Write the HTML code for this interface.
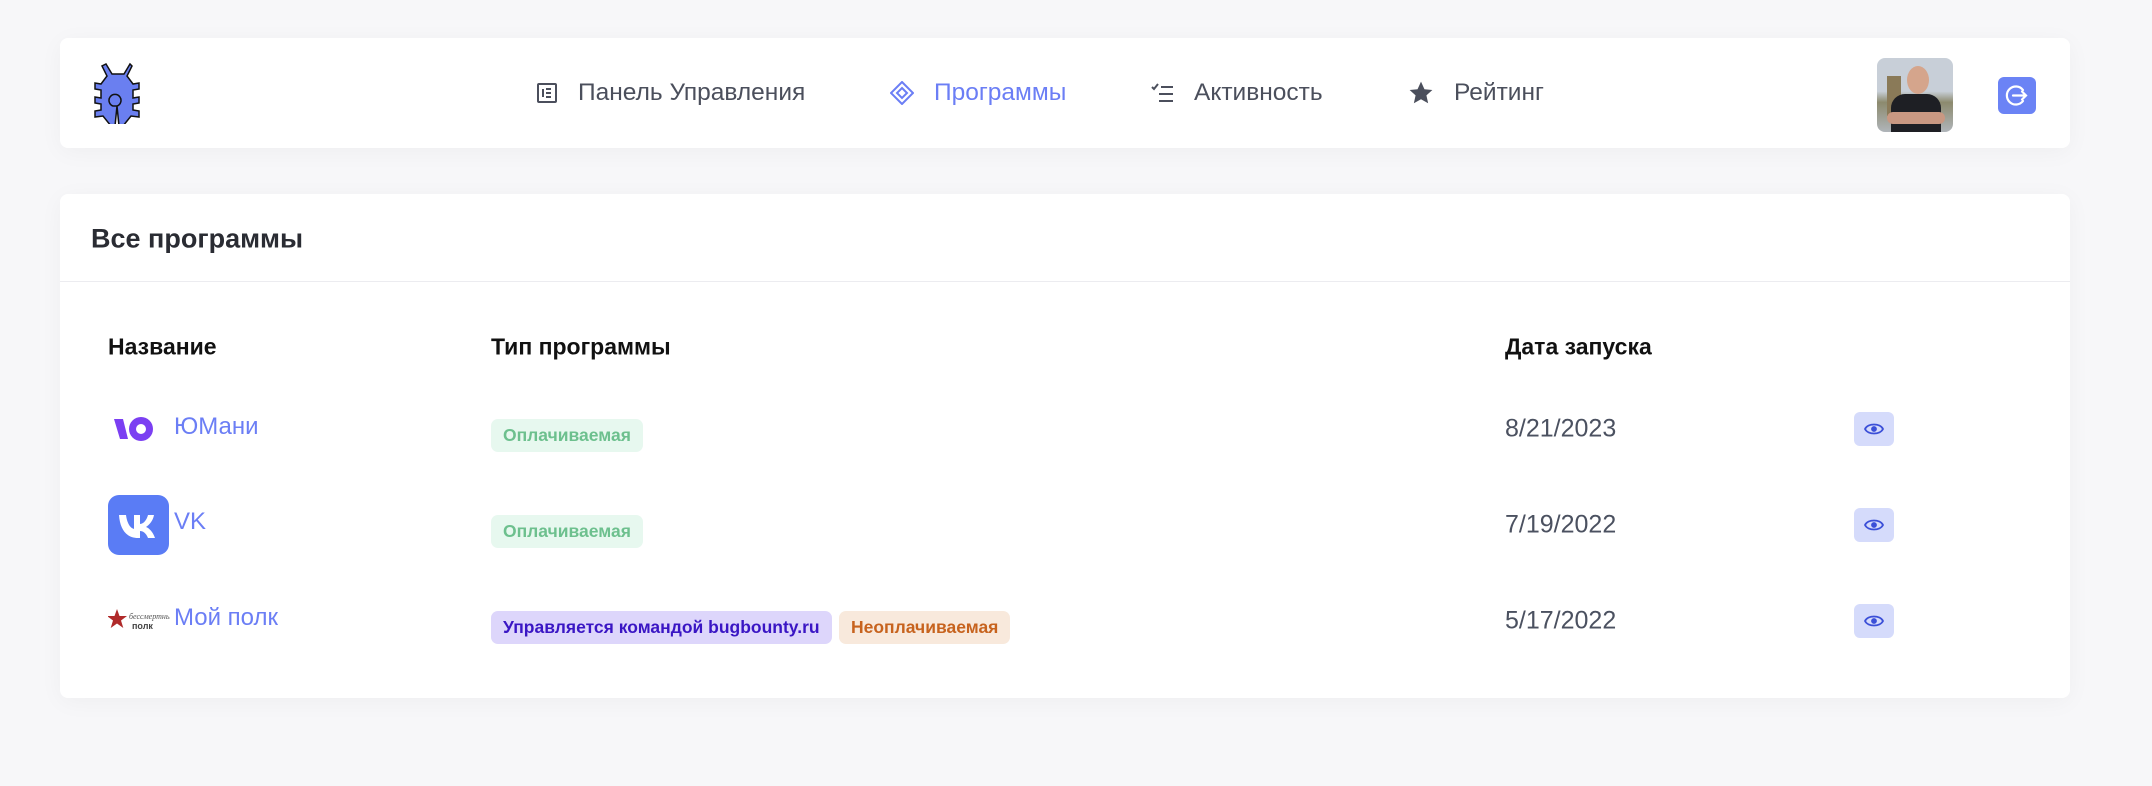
<!DOCTYPE html>
<html><head><meta charset="utf-8"><style>
*{box-sizing:border-box;margin:0;padding:0}
body{width:2152px;height:786px;background:#f7f7f9;font-family:"Liberation Sans","DejaVu Sans",sans-serif;position:relative;overflow:hidden}
.card{position:absolute;left:60px;width:2010px;background:#fff;border-radius:8px;box-shadow:0 4px 24px rgba(0,0,0,0.04)}
.nav{position:absolute;top:93px;transform:translateY(-50%);display:flex;align-items:center;font-size:24.5px;color:#4b4f5c}
.nav svg{margin-right:20px}
.abs{position:absolute}
.th{position:absolute;top:347px;transform:translateY(-50%);font-weight:bold;font-size:23px;color:#111}
.name{position:absolute;font-size:24px;color:#6b7ef5;transform:translateY(-50%)}
.badge{position:absolute;height:33px;line-height:33px;padding:0 12px;border-radius:7px;font-size:17.5px;font-weight:bold}
.date{position:absolute;left:1505px;font-size:25px;color:#4b5160;transform:translateY(-50%)}
.eye{position:absolute;left:1854px;width:40px;height:34px;background:#d5dbfb;border-radius:6px;display:flex;align-items:center;justify-content:center;transform:translateY(-50%)}
</style></head><body>
<div class="card" style="top:38px;height:110px"></div>
<svg class="abs" style="left:88px;top:62px" width="60" height="62" viewBox="0 0 60 62">
<path d="M18 2l6 10h12l6-10 2 2-5 10 6 8 6-1v6l-6 1v8l6-1v6l-6 1 0 6 6 1v6l-8-1-8 10-4 0-2-20h-4a6 6 0 1 1 4 0l-2 20h-4l-8-10-8 1v-6l6-1 0-6-6-1v-6l6 1v-8l-6-1v-6l6 1 6-8-5-10z" fill="#6a7ff0" stroke="#111" stroke-width="1.5"/>
</svg>
<div class="nav" style="left:536px"><svg width="22" height="22" viewBox="0 0 22 22" fill="none" stroke="#4b4f5c" stroke-width="2"><rect x="2" y="2" width="18" height="18" rx="1"/><path d="M7 7v8M10 7h5M10 11h5M10 15h5"/></svg>Панель Управления</div>
<div class="nav" style="left:890px;color:#6b7ef5"><svg width="24" height="24" viewBox="0 0 24 24" fill="none" stroke="#6b7ef5" stroke-width="2"><path d="M12 1l11 11-11 11L1 12z"/><path d="M12 7l5 5-5 5-5-5z"/></svg>Программы</div>
<div class="nav" style="left:1150px"><svg width="24" height="22" viewBox="0 0 24 22" fill="none" stroke="#4b4f5c" stroke-width="2"><path d="M2 5l2 2 4-5M11 5h12M9 12h14M9 19h14"/></svg>Активность</div>
<div class="nav" style="left:1408px"><svg width="26" height="26" viewBox="0 0 24 24"><path d="M12 1.5l3.2 7 7.3.7-5.5 5 1.6 7.3L12 17.8 5.4 21.5 7 14.2l-5.5-5 7.3-.7z" fill="#4b4f5c"/></svg>Рейтинг</div>
<div class="abs" style="left:1877px;top:58px;width:76px;height:74px;border-radius:8px;overflow:hidden;background:linear-gradient(#c8cfd8 0,#c8cfd8 45%,#8c8a6e 60%,#b0b5ba 100%)">
<div class="abs" style="left:10px;top:18px;width:14px;height:40px;background:#8a7a58"></div>
<div class="abs" style="left:30px;top:8px;width:22px;height:28px;border-radius:50%;background:#d5a58c"></div>
<div class="abs" style="left:14px;top:36px;width:50px;height:40px;border-radius:14px 14px 0 0;background:#1e1f24"></div>
<div class="abs" style="left:10px;top:54px;width:58px;height:12px;border-radius:6px;background:#c99882"></div>
</div>
<div class="abs" style="left:1998px;top:77px;width:38px;height:37px;background:#6b83f5;border-radius:6px"><svg width="38" height="37" viewBox="0 0 38 37" fill="none" stroke="#fff" stroke-width="2.2" stroke-linecap="round"><path d="M25 13a9 9 0 1 0 0 11"/><path d="M15 18.5h13M24 14.5l4 4-4 4"/></svg></div>

<div class="card" style="top:194px;height:504px"></div>
<div class="abs" style="left:60px;top:281px;width:2010px;height:1px;background:#ececf0"></div>
<div class="abs" style="left:91px;top:239px;transform:translateY(-50%);font-size:27px;font-weight:bold;color:#2a2c33">Все программы</div>
<div class="th" style="left:108px">Название</div>
<div class="th" style="left:491px">Тип программы</div>
<div class="th" style="left:1505px">Дата запуска</div>

<svg class="abs" style="left:114px;top:415px" width="42" height="28" viewBox="0 0 42 28"><path d="M0 4h9l5 20H6z" fill="#7b3ff2"/><circle cx="27" cy="14" r="12" fill="#7b3ff2"/><circle cx="27" cy="14" r="5" fill="#fff"/></svg>
<div class="name" style="left:174px;top:427px">ЮМани</div>
<div class="badge" style="left:491px;top:419px;background:#e7f8ef;color:#6dc08e">Оплачиваемая</div>
<div class="date" style="top:429px">8/21/2023</div>
<div class="eye" style="top:429px"><svg width="20" height="14" viewBox="0 0 20 14" fill="none" stroke="#3b4fd8" stroke-width="1.8"><path d="M1 7c3-6 15-6 18 0-3 6-15 6-18 0z"/><circle cx="10" cy="7" r="2" fill="#3b4fd8"/></svg></div>

<div class="abs" style="left:108px;top:495px;width:61px;height:60px;border-radius:11px;background:#5a7cf5"><svg width="61" height="60" viewBox="0 0 61 60"><path d="M11 20h7c1 8 4 13 8 14V20h6v9c4 0 7-5 8-9h6c-1 6-5 10-8 12 3 1 7 5 9 11h-7c-2-5-5-7-8-7v7h-2c-11 0-18-8-19-23z" fill="#fff"/></svg></div>
<div class="name" style="left:174px;top:522px">VK</div>
<div class="badge" style="left:491px;top:515px;background:#e7f8ef;color:#6dc08e">Оплачиваемая</div>
<div class="date" style="top:525px">7/19/2022</div>
<div class="eye" style="top:525px"><svg width="20" height="14" viewBox="0 0 20 14" fill="none" stroke="#3b4fd8" stroke-width="1.8"><path d="M1 7c3-6 15-6 18 0-3 6-15 6-18 0z"/><circle cx="10" cy="7" r="2" fill="#3b4fd8"/></svg></div>

<svg class="abs" style="left:108px;top:608px" width="62" height="24" viewBox="0 0 62 24"><path d="M9 1l2.5 7H19l-6 4.5 2.3 7.5L9 15.5 2.7 20 5 12.5-1 8h7.5z" fill="#b02a2a"/><text x="21" y="11" font-size="8" font-style="italic" fill="#555" font-family="Liberation Serif">бессмертный</text><text x="24" y="21" font-size="9" font-weight="bold" fill="#444" font-family="Liberation Sans">полк</text></svg>
<div class="name" style="left:174px;top:618px">Мой полк</div>
<div class="badge" style="left:491px;top:611px;background:#ddd6fb;color:#3a16c4">Управляется командой bugbounty.ru</div>
<div class="badge" style="left:839px;top:611px;background:#f8e9dc;color:#c7631e">Неоплачиваемая</div>
<div class="date" style="top:621px">5/17/2022</div>
<div class="eye" style="top:621px"><svg width="20" height="14" viewBox="0 0 20 14" fill="none" stroke="#3b4fd8" stroke-width="1.8"><path d="M1 7c3-6 15-6 18 0-3 6-15 6-18 0z"/><circle cx="10" cy="7" r="2" fill="#3b4fd8"/></svg></div>
</body></html>
